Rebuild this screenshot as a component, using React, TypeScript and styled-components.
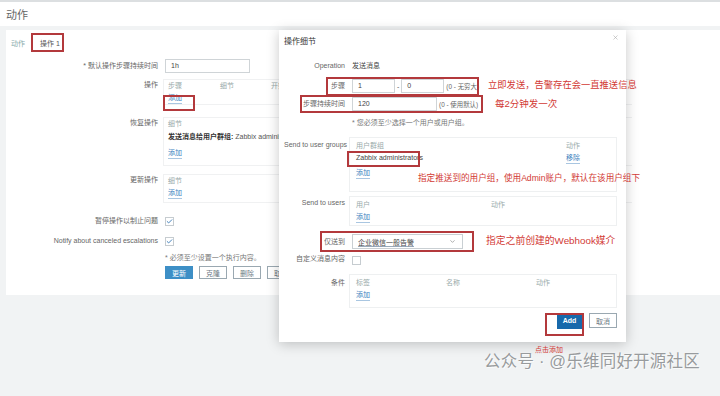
import styled, { createGlobalStyle } from "styled-components";
import { Check, ChevronDown, X } from "lucide-react";

const GlobalStyle = createGlobalStyle`
  html, body { margin: 0; padding: 0; }
  body {
    font-family: "Liberation Sans", "Noto Sans CJK SC", sans-serif;
    background: #f1f3f4;
  }
`;

export default function App() {
  return (
    <Page>
      <GlobalStyle />
      <TopLine />
      <Header>动作</Header>
      <Card>
        <Tabs>
          <Tab>动作</Tab>
          <Tab $active>操作 1</Tab>
        </Tabs>
        <Form>
          <Row $mb={6}>
            <Label $h={14}>* 默认操作步骤持续时间</Label>
            <Field>
              <Input $w={85}>1h</Input>
            </Field>
          </Row>
          <Row $mb={12}>
            <Label>操作</Label>
            <SubBox $cols="52px 51px 1fr">
              <Th>步骤</Th>
              <Th>细节</Th>
              <Th>开始于</Th>
              <LinkCell>添加</LinkCell>
            </SubBox>
          </Row>
          <Row $mb={8}>
            <Label>恢复操作</Label>
            <SubBox $cols="1fr" $pb={6}>
              <Th>细节</Th>
              <Bold>
                <b>发送消息给用户群组:</b> Zabbix administrators via all media
              </Bold>
              <LinkCell $mt={3}>添加</LinkCell>
            </SubBox>
          </Row>
          <Row $mb={12}>
            <Label>更新操作</Label>
            <SubBox $cols="1fr" $pb={3}>
              <Th>细节</Th>
              <LinkCell>添加</LinkCell>
            </SubBox>
          </Row>
          <Row $mb={8}>
            <Label>暂停操作以制止问题</Label>
            <Field>
              <Box $checked>
                <Check size={7} strokeWidth={3} />
              </Box>
            </Field>
          </Row>
          <Row $mb={5}>
            <Label>Notify about canceled escalations</Label>
            <Field>
              <Box $checked>
                <Check size={7} strokeWidth={3} />
              </Box>
            </Field>
          </Row>
          <Row $mb={1}>
            <span />
            <Note>* 必须至少设置一个执行内容。</Note>
          </Row>
          <Row>
            <span />
            <Buttons>
              <Button $primary>更新</Button>
              <Button>克隆</Button>
              <Button>删除</Button>
              <Button>取消</Button>
            </Buttons>
          </Row>
        </Form>
      </Card>

      <Dialog>
        <DialogHead>
          <DialogTitle>操作细节</DialogTitle>
          <Close>
            <X size={7} strokeWidth={2} />
          </Close>
        </DialogHead>
        <DForm>
          <DRow $mb={7}>
            <DLabel>Operation</DLabel>
            <Value>发送消息</Value>
          </DRow>
          <DRow $mb={4}>
            <DLabel $h={14}>步骤</DLabel>
            <Inline>
              <Input $w={43}>1</Input>
              <Dash>-</Dash>
              <Input $w={43}>0</Input>
              <Hint>(0 - 无穷大)</Hint>
            </Inline>
          </DRow>
          <DRow $mb={6}>
            <DLabel $h={14}>步骤持续时间</DLabel>
            <Inline>
              <Input $w={85}>120</Input>
              <Hint>(0 - 使用默认)</Hint>
            </Inline>
          </DRow>
          <DRow $mb={8}>
            <span />
            <Note>* 您必须至少选择一个用户或用户组。</Note>
          </DRow>
          <DRow $mb={4}>
            <DLabel $pt={2}>Send to user groups</DLabel>
            <DBox $cols="210px 1fr" $h={55}>
              <Th>用户群组</Th>
              <Th>动作</Th>
              <Value>Zabbix administrators</Value>
              <LinkCell>移除</LinkCell>
              <LinkCell $mt={3}>添加</LinkCell>
            </DBox>
          </DRow>
          <DRow $mb={5}>
            <DLabel $pt={1}>Send to users</DLabel>
            <DBox $cols="135px 1fr" $h={30}>
              <Th>用户</Th>
              <Th>动作</Th>
              <LinkCell>添加</LinkCell>
            </DBox>
          </DRow>
          <DRow $mb={5} $pt={3}>
            <DLabel $h={15}>仅送到</DLabel>
            <Select>
              企业微信一般告警
              <ChevronDown size={7} color="#777" />
            </Select>
          </DRow>
          <DRow $mb={8}>
            <DLabel $h={10}>自定义消息内容</DLabel>
            <Field>
              <Box />
            </Field>
          </DRow>
          <DRow>
            <DLabel $pt={3}>条件</DLabel>
            <DBox $cols="90px 90px 1fr" $h={34}>
              <Th>标签</Th>
              <Th>名称</Th>
              <Th>动作</Th>
              <LinkCell>添加</LinkCell>
            </DBox>
          </DRow>
        </DForm>
        <DialogFoot>
          <Button $primary $dark>Add</Button>
          <Button>取消</Button>
        </DialogFoot>
      </Dialog>

      <Mark $x={31} $y={33} $w={33} $h={19} />
      <Mark $x={163} $y={95} $w={32} $h={16} />
      <Mark $x={326} $y={77} $w={153} $h={19} />
      <Mark $x={300} $y={95} $w={183} $h={18} />
      <Mark $x={347} $y={151} $w={73} $h={16} />
      <Mark $x={320} $y={231} $w={154} $h={21} />
      <Mark $x={545} $y={313} $w={39} $h={23} />

      <Annot $x={488} $y={86} $size={9.3}>立即发送，告警存在会一直推送信息</Annot>
      <Annot $x={495} $y={104} $size={9.5}>每2分钟发一次</Annot>
      <Annot $x={418} $y={178} $size={8.6}>指定推送到的用户组，使用Admin账户，默认在该用户组下</Annot>
      <Annot $x={486} $y={241} $size={9.8}>指定之前创建的Webhook媒介</Annot>
      <Annot $x={535} $y={349} $size={7}>点击添加</Annot>

      <Watermark>公众号 · @乐维同好开源社区</Watermark>
    </Page>
  );
}

const Page = styled.div`
  position: relative;
  width: 720px;
  height: 396px;
  overflow: hidden;
  background: #f1f3f4;
`;

const TopLine = styled.div`
  height: 2px;
  background: #dcdfe1;
`;

const Header = styled.div`
  height: 24px;
  display: flex;
  align-items: center;
  padding-left: 6px;
  background: #fff;
  color: #666;
  font-size: 11px;
`;

const Card = styled.div`
  margin: 4px 0 0 6px;
  height: 265px;
  background: #fff;
`;

const Tabs = styled.div`
  display: flex;
  align-items: center;
  gap: 15px;
  height: 19px;
  padding: 3px 0 0 5px;
  font-size: 7px;
  color: #888;
`;

const Tab = styled.div<{ $active?: boolean }>`
  color: ${(p) => (p.$active ? "#555" : "#8aa")};
`;

const Form = styled.div`
  padding-top: 7px;
  font-size: 7px;
`;

const Row = styled.div<{ $mb?: number }>`
  display: grid;
  grid-template-columns: 152px 1fr;
  column-gap: 7px;
  align-items: start;
  margin-bottom: ${(p) => p.$mb ?? 0}px;
`;

const Label = styled.div<{ $h?: number; $pt?: number }>`
  text-align: right;
  color: #666;
  line-height: ${(p) => p.$h ?? 12}px;
  padding-top: ${(p) => p.$pt ?? 0}px;
  white-space: nowrap;
`;

const Field = styled.div`
  display: flex;
  align-items: center;
  min-height: 12px;
`;

const Input = styled.div<{ $w: number }>`
  box-sizing: border-box;
  width: ${(p) => p.$w}px;
  height: 14px;
  border: 1px solid #cfd4d7;
  padding-left: 5px;
  line-height: 12px;
  color: #444;
  font-size: 7px;
  background: #fff;
`;

const SubBox = styled.div<{ $cols: string; $pb?: number }>`
  display: grid;
  grid-template-columns: ${(p) => p.$cols};
  margin-left: -2px;
  padding: 0 4px ${(p) => p.$pb ?? 0}px;
  border: 1px solid #f0f1f2;
  border-width: 1px 0 1px 1px;
  width: 460px;
  line-height: 12px;
`;

const Th = styled.div`
  color: #9aa;
  line-height: 12px;
`;

const LinkCell = styled.div<{ $mt?: number }>`
  grid-column: 1;
  justify-self: start;
  margin-top: ${(p) => p.$mt ?? 0}px;
  color: #3d82c0;
  line-height: 11px;
  border-bottom: 1px solid #a9c6e1;
  &:nth-of-type(4) {
    grid-column: auto;
  }
`;

const Bold = styled.div`
  color: #555;
  line-height: 14px;
  white-space: nowrap;
  b {
    color: #333;
  }
`;

const Box = styled.div<{ $checked?: boolean }>`
  box-sizing: border-box;
  width: 9px;
  height: 9px;
  border: 1px solid #c6ccd0;
  display: flex;
  align-items: center;
  justify-content: center;
  color: #2f74b5;
  background: #fff;
  margin-top: 1px;
`;

const Note = styled.div`
  color: #777;
  line-height: 12px;
`;

const Buttons = styled.div`
  display: flex;
  gap: 6px;
  margin-top: 1px;
`;

const Button = styled.div<{ $primary?: boolean; $dark?: boolean }>`
  box-sizing: border-box;
  width: ${(p) => (p.$dark ? 25 : 28)}px;
  height: ${(p) => (p.$dark ? 16 : 13)}px;
  display: flex;
  align-items: center;
  justify-content: center;
  font-size: 7px;
  border: 1px solid ${(p) => (p.$primary ? (p.$dark ? "#1769ab" : "#3d8fc6") : "#9aa8b1")};
  background: ${(p) => (p.$primary ? (p.$dark ? "#1769ab" : "#3d8fc6") : "#fff")};
  color: ${(p) => (p.$primary ? "#fff" : "#6c7a84")};
  font-weight: ${(p) => (p.$dark ? 700 : 400)};
`;

const Dialog = styled.div`
  position: absolute;
  left: 279px;
  top: 30px;
  width: 347px;
  height: 312px;
  box-sizing: border-box;
  background: #fff;
  box-shadow: 0 2px 12px rgba(0, 0, 0, 0.22);
  padding: 0 9px 0 5px;
  display: flex;
  flex-direction: column;
  font-size: 7px;
`;

const DialogHead = styled.div`
  display: flex;
  justify-content: space-between;
  align-items: flex-start;
  height: 30px;
`;

const DialogTitle = styled.div`
  margin-top: 7px;
  font-size: 8px;
  line-height: 10px;
  color: #333;
`;

const Close = styled.div`
  margin-top: 4px;
  margin-right: -2px;
  color: #aaa;
  display: flex;
`;

const DForm = styled.div`
  flex: 1;
`;

const DRow = styled.div<{ $mb?: number; $pt?: number }>`
  display: grid;
  grid-template-columns: 61px 1fr;
  column-gap: 7px;
  align-items: start;
  margin-bottom: ${(p) => p.$mb ?? 0}px;
  padding-top: ${(p) => p.$pt ?? 0}px;
`;

const DLabel = styled(Label)``;

const Value = styled.div`
  color: #444;
  line-height: 12px;
`;

const Inline = styled.div`
  display: flex;
  align-items: center;
  gap: 2px;
`;

const Dash = styled.span`
  color: #555;
`;

const Hint = styled.span`
  color: #666;
  font-size: 6.4px;
  white-space: nowrap;
`;

const DBox = styled.div<{ $cols: string; $h: number }>`
  box-sizing: border-box;
  display: grid;
  grid-template-columns: ${(p) => p.$cols};
  grid-auto-rows: min-content;
  align-content: start;
  margin-left: -3px;
  height: ${(p) => p.$h}px;
  padding: 2px 6px 0;
  border: 1px solid #eef0f1;
  line-height: 12px;
`;

const Select = styled.div`
  box-sizing: border-box;
  width: 111px;
  height: 15px;
  border: 1px solid #c9cfd3;
  display: flex;
  align-items: center;
  justify-content: space-between;
  padding: 0 6px 0 5px;
  color: #444;
  text-decoration: underline;
  text-decoration-color: #9ab;
`;

const DialogFoot = styled.div`
  display: flex;
  justify-content: flex-end;
  align-items: center;
  gap: 7px;
  height: 25px;
  padding-bottom: 9px;
  & > div:last-child {
    height: 15px;
  }
`;

const Mark = styled.div<{ $x: number; $y: number; $w: number; $h: number }>`
  position: absolute;
  left: ${(p) => p.$x}px;
  top: ${(p) => p.$y}px;
  width: ${(p) => p.$w}px;
  height: ${(p) => p.$h}px;
  box-sizing: border-box;
  border: 2px solid #b3393c;
`;

const Annot = styled.div<{ $x: number; $y: number; $size: number }>`
  position: absolute;
  left: ${(p) => p.$x}px;
  top: ${(p) => p.$y}px;
  transform: translateY(-50%);
  font-size: ${(p) => p.$size}px;
  line-height: 1;
  color: #d23a35;
  white-space: nowrap;
`;

const Watermark = styled.div`
  position: absolute;
  left: 484px;
  top: 353px;
  font-size: 16.5px;
  line-height: 17px;
  color: #8f9294;
  letter-spacing: 0.2px;
  text-shadow: 0 0 2px #fff, 1px 1px 0 rgba(255, 255, 255, 0.8);
  white-space: nowrap;
  opacity: 0.9;
`;
